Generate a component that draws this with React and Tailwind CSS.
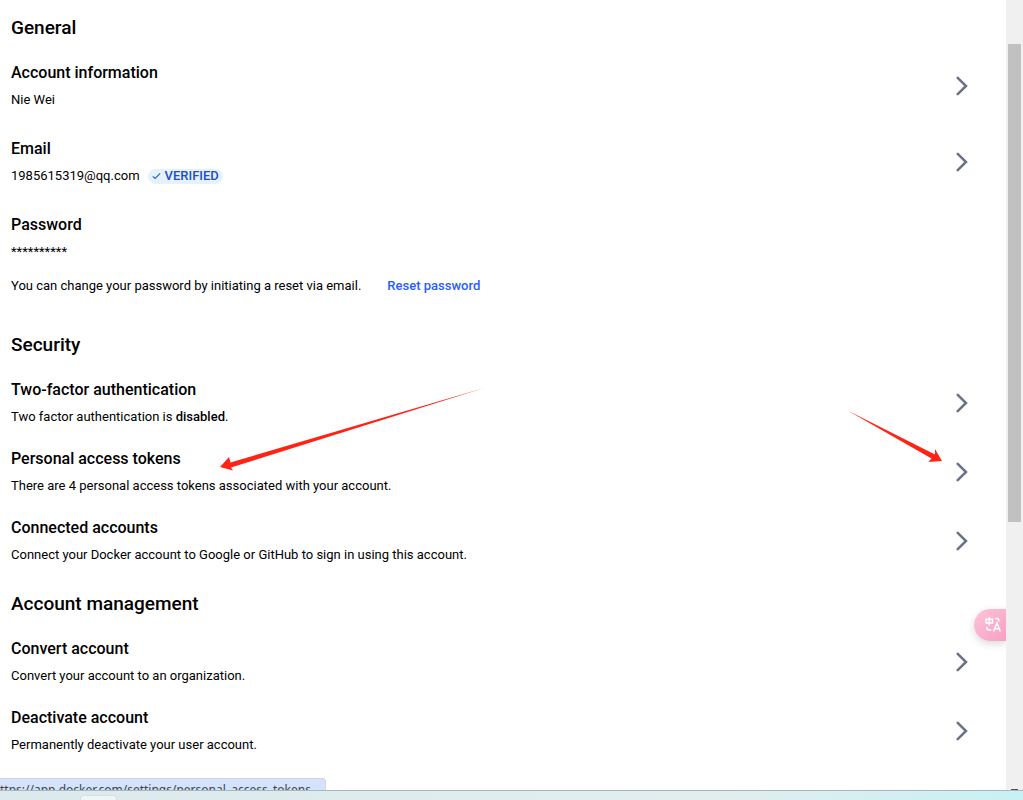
import clsx from "clsx";

const Chevron = () => (
    <svg className="h-5 w-3 shrink-0" viewBox="0 0 12 20" fill="none" aria-hidden="true">
        <path d="M1.7 1.8L10 10L1.7 18.2" stroke="#677285" strokeWidth="2.5" strokeLinecap="round" />
    </svg>
);

const SettingRow = ({ title, children }) => (
    <a href="#" className="flex items-center justify-between pr-[38px]">
        <div>
            <h3 className="text-base leading-6 font-medium">{title}</h3>
            <div className="mt-1 flex items-center text-[13px] leading-[22px]">{children}</div>
        </div>
        <Chevron />
    </a>
);

const Section = ({ title, wide, children }) => (
    <section>
        <h2 className="text-[19px] leading-7 font-medium">{title}</h2>
        <div className={clsx("mt-[19px] flex flex-col", wide ? "gap-[26px]" : "gap-[19px]")}>
            {children}
        </div>
    </section>
);

const VerifiedBadge = () => (
    <span className="ml-2 flex h-[15px] items-center gap-1 rounded-full bg-[#e5f2fc] px-1 font-medium text-[#1d4fc4]">
        <svg className="h-2 w-[9px]" viewBox="0 0 9 8" fill="none" aria-hidden="true">
            <path d="M0.8 4.3L3.1 6.5L8.2 1.3" stroke="#2560cc" strokeWidth="1.1" />
        </svg>
        VERIFIED
    </span>
);

const Scrollbar = () => (
    <div className="relative w-[17px] shrink-0 bg-[#f0f0f0] px-[2px] pt-11">
        <div className="h-[478px] bg-[#c1c1c1]" />
        <div className="absolute bottom-0 left-[5px] h-px w-[7px] bg-[#505050]" />
    </div>
);

const TranslateButton = () => (
    <button
        aria-label="Translate"
        className="absolute top-[609px] right-0 flex h-8 w-8 items-center rounded-l-full bg-linear-to-br from-[#fbc4da] to-[#f8a0c2] pl-[11px] shadow-[0_3px_8px_rgba(0,0,0,0.15)]"
    >
        <svg className="h-4 w-4" viewBox="0 0 16 16" fill="none" stroke="#fff" strokeWidth="1.5" aria-hidden="true">
            <path d="M1 2.2H7.5V6H1ZM4.25 0V8.4" />
            <path d="M10 1.5H11.8Q13.8 1.5 13.8 3.5V4.5" />
            <path d="M1.8 9.8V10.8Q1.8 13 4 13H6.2" />
            <path d="M8.5 14.4L12 6L15.3 14.4M9.8 11.8H14.2" />
        </svg>
    </button>
);

const Arrows = () => (
    <svg
        className="pointer-events-none absolute top-[380px] left-0 h-[100px] w-[1006px]"
        viewBox="0 0 1006 100"
        fill="#ff2315"
        aria-hidden="true"
    >
        <path d="M484 8L231 87.5L233 90.5L220 87L229 77L230.5 82.5Z" />
        <path d="M847.5 30.5L935 74.5L935 69L942 81L928.5 82L931.5 78.5Z" />
    </svg>
);

const App = () => {
    return (
        <div className="flex h-screen flex-col overflow-hidden bg-white font-['Roboto',sans-serif] text-black">
            <div className="flex min-h-0 flex-1">
                <main className="relative min-w-0 flex-1 overflow-hidden pt-[14px] pl-[11px]">
                    <Section title="General" wide>
                        <SettingRow title="Account information">Nie Wei</SettingRow>
                        <SettingRow title="Email">
                            1985615319@qq.com
                            <VerifiedBadge />
                        </SettingRow>
                        <div>
                            <h3 className="text-base leading-6 font-medium">Password</h3>
                            <p className="mt-1 text-[13px] leading-[22px]">**********</p>
                            <div className="mt-3 flex gap-[26px] text-[13px] leading-[22px]">
                                <p>You can change your password by initiating a reset via email.</p>
                                <a href="#" className="font-medium text-[#2560ff]">Reset password</a>
                            </div>
                        </div>
                    </Section>

                    <div className="mt-[34px]">
                        <Section title="Security">
                            <SettingRow title="Two-factor authentication">
                                <p>Two factor authentication is <b className="font-medium">disabled</b>.</p>
                            </SettingRow>
                            <SettingRow title="Personal access tokens">
                                There are 4 personal access tokens associated with your account.
                            </SettingRow>
                            <SettingRow title="Connected accounts">
                                Connect your Docker account to Google or GitHub to sign in using this account.
                            </SettingRow>
                        </Section>
                    </div>

                    <div className="mt-6">
                        <Section title="Account management">
                            <SettingRow title="Convert account">Convert your account to an organization.</SettingRow>
                            <SettingRow title="Deactivate account">Permanently deactivate your user account.</SettingRow>
                        </Section>
                    </div>

                    <Arrows />
                    <TranslateButton />

                    {/* link preview */}
                    <div className="absolute bottom-0 left-0 h-3 w-[326px] overflow-hidden rounded-tr border-t border-r border-[#d5d5d5] bg-[#d3e3fd] pt-[3px] font-['Noto_Sans',sans-serif] text-xs leading-4 whitespace-nowrap text-[#444]">
                        ttps://app.docker.com/settings/personal_access_tokens
                    </div>
                </main>
                <Scrollbar />
            </div>

            {/* taskbar */}
            <footer className="h-[10px] shrink-0 border-t border-[#a9b9bb] bg-linear-to-r from-[#dceaee] via-[#e2eeee] via-70% to-[#c8f0f4]">
                <div className="mt-1 ml-20 h-[5px] w-[37px] rounded-t border border-b-0 border-[#d3e0e3] bg-[#eff6f7]" />
            </footer>
        </div>
    );
};

export default App;
